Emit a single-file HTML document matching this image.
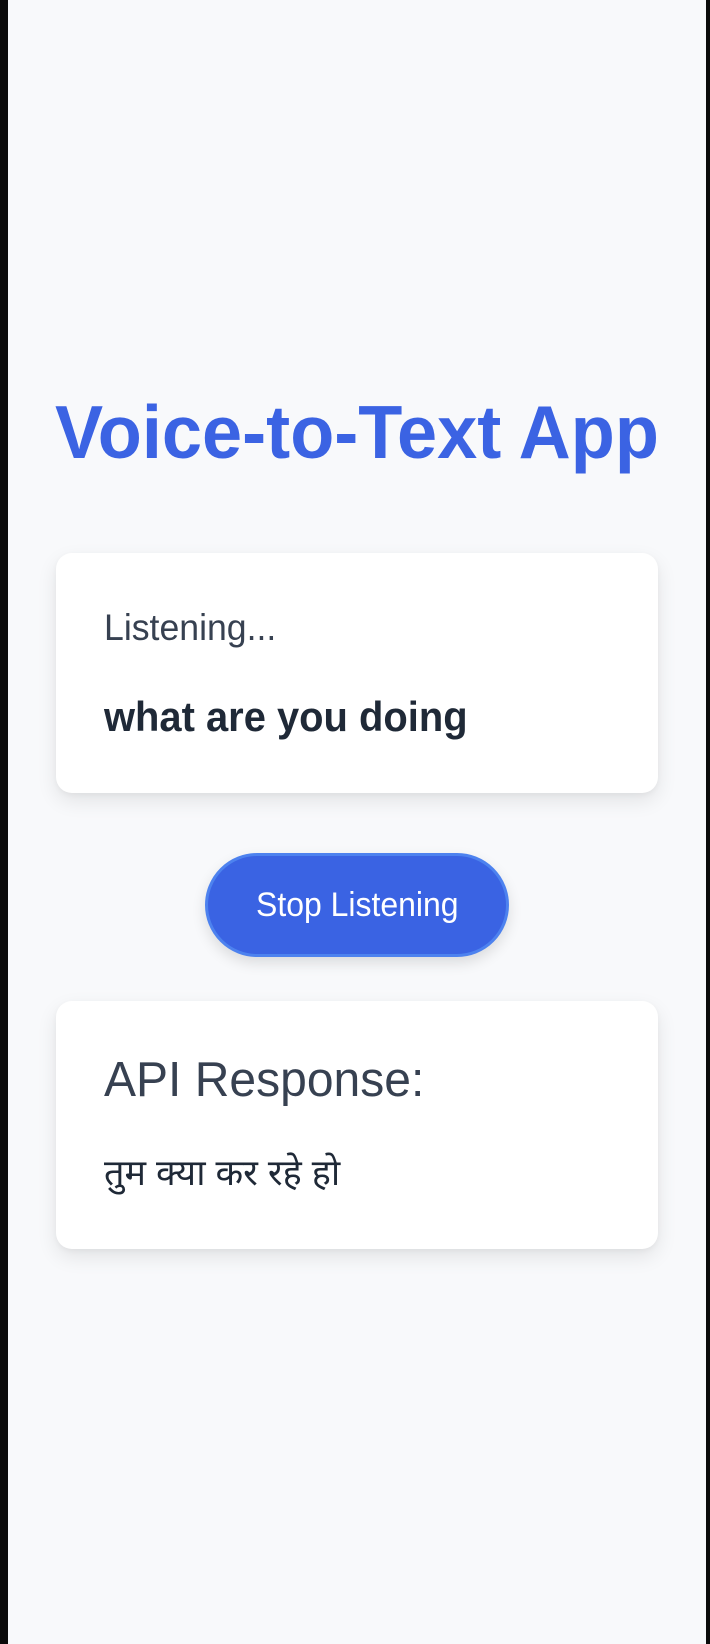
<!DOCTYPE html>
<html><head><meta charset="utf-8"><style>
html,body{margin:0;padding:0;}
body{width:710px;height:1644px;background:#0b0b0b;position:relative;overflow:hidden;font-family:"Liberation Sans",Arial,sans-serif;}
.page{position:absolute;left:8px;top:0;width:698px;height:1644px;background:#f8f9fb;}
.t{position:absolute;white-space:nowrap;line-height:1;transform-origin:0 0;}
.card{position:absolute;left:56px;width:602px;background:#fff;border-radius:16px;box-shadow:0 8px 20px rgba(0,0,0,0.09),0 2px 6px rgba(0,0,0,0.04);}
.btn{position:absolute;left:205px;top:853px;width:298px;height:98px;border-radius:52px;background:#3a63e3;border:3px solid #4d82ef;box-shadow:0 6px 14px rgba(0,0,0,0.12);}
</style></head><body>
<div class="page"></div>
<div class="t" style="left:55px;top:395px;font-size:75px;font-weight:bold;color:#3b63e3;transform:scaleX(0.962);">Voice-to-Text App</div>
<div class="card" style="top:553px;height:240px;"></div>
<div class="t" style="left:104px;top:609px;font-size:37.5px;color:#374151;transform:scaleX(0.95);">Listening...</div>
<div class="t" style="left:104px;top:696px;font-size:42px;font-weight:bold;color:#1f2937;transform:scaleX(0.95);">what are you doing</div>
<div class="btn"></div>
<div class="t" style="left:256px;top:888px;font-size:34px;color:#fff;transform:scaleX(0.94);">Stop Listening</div>
<div class="card" style="top:1001px;height:248px;"></div>
<div class="t" style="left:104px;top:1056px;font-size:49px;color:#374151;transform:scaleX(0.98);">API Response:</div>
<div class="t" style="left:104px;top:1155px;font-size:36px;color:#1f2937;font-family:'Liberation Sans','Noto Sans Devanagari','Lohit Devanagari','FreeSans',sans-serif;">तुम क्या कर रहे हो</div>
</body></html>
